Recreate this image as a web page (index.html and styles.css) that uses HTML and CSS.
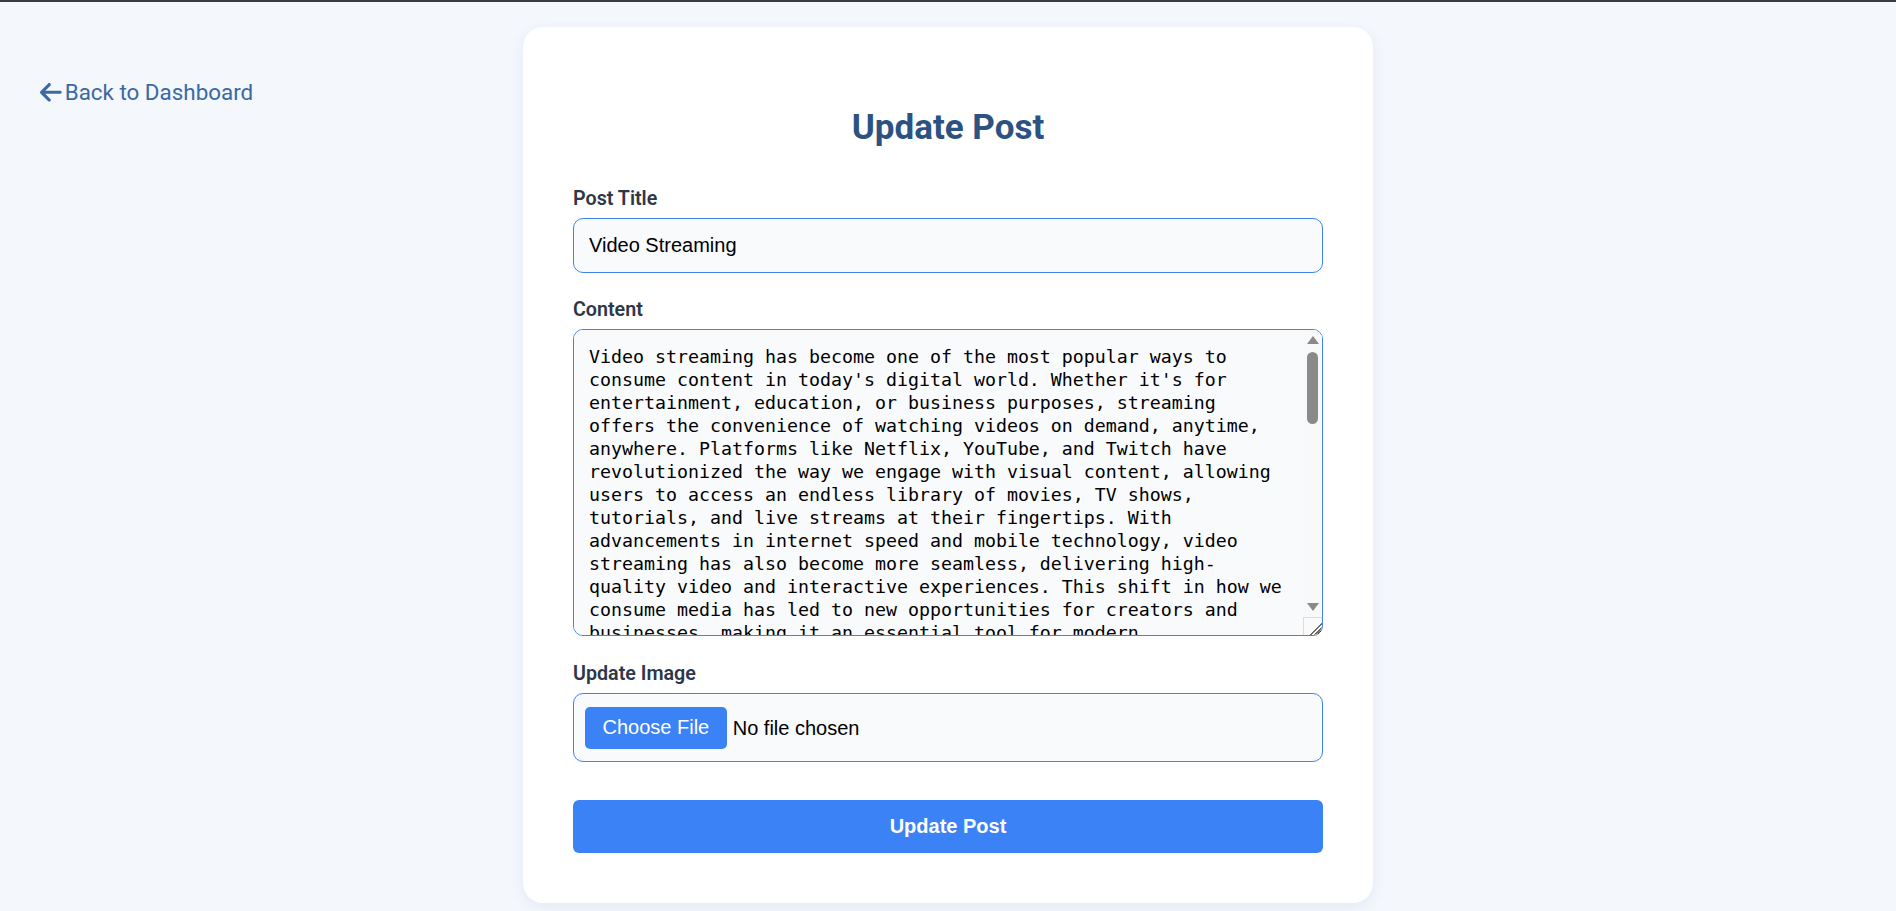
FILE: index.html
```html
<!DOCTYPE html>
<html lang="en">
<head>
<meta charset="utf-8">
<title>Update Post</title>
<link rel="stylesheet" href="styles.css">
</head>
<body>
<div class="topbar"></div>
<div class="page">
  <aside class="side">
    <a class="back" href="#">
      <svg class="back-icon" viewBox="0 64 448 384" aria-hidden="true"><path d="M9.4 233.4c-12.5 12.5-12.5 32.8 0 45.3l160 160c12.5 12.5 32.8 12.5 45.3 0s12.5-32.8 0-45.3L109.2 288 416 288c17.7 0 32-14.3 32-32s-14.3-32-32-32l-306.7 0L214.6 118.6c12.5-12.5 12.5-32.8 0-45.3s-32.8-12.5-45.3 0l-160 160z"/></svg>
      <span>Back to Dashboard</span>
    </a>
  </aside>
  <main class="card">
    <h2 class="title">Update Post</h2>
    <form class="form">
      <div class="group">
        <label class="label" for="post-title">Post Title</label>
        <input id="post-title" class="field input" type="text" value="Video Streaming">
      </div>
      <div class="group">
        <label class="label" for="post-content">Content</label>
        <div class="editor">
          <textarea id="post-content" class="field textarea">Video streaming has become one of the most popular ways to consume content in today's digital world. Whether it's for entertainment, education, or business purposes, streaming offers the convenience of watching videos on demand, anytime, anywhere. Platforms like Netflix, YouTube, and Twitch have revolutionized the way we engage with visual content, allowing users to access an endless library of movies, TV shows, tutorials, and live streams at their fingertips. With advancements in internet speed and mobile technology, video streaming has also become more seamless, delivering high-quality video and interactive experiences. This shift in how we consume media has led to new opportunities for creators and businesses, making it an essential tool for modern communication and marketing.

The rise of live streaming has further transformed the industry, enabling real-time interaction between creators and their audiences. Gamers, musicians, educators, and influencers can now broadcast events as they happen, building communities around shared interests. Features such as live chat, reactions, and virtual gifts have made viewers active participants rather than passive consumers, creating a more engaging and personal experience.

Behind the scenes, streaming relies on sophisticated technologies such as adaptive bitrate streaming, content delivery networks, and efficient video compression codecs like H.264, H.265, and AV1. These technologies ensure that videos load quickly and play smoothly, automatically adjusting quality based on each viewer's internet connection and device capabilities.

Looking ahead, the future of video streaming is bright. Emerging trends like 4K and 8K resolution, virtual reality, cloud gaming, and AI-powered recommendations promise to make streaming even more immersive and personalized. As technology continues to evolve, video streaming will remain at the heart of how we learn, connect, and entertain ourselves.</textarea>
          <div class="scrollbar" aria-hidden="true">
            <span class="sb-btn sb-up"></span>
            <span class="sb-track"><span class="sb-thumb"></span></span>
            <span class="sb-btn sb-down"></span>
          </div>
          <span class="resizer" aria-hidden="true"></span>
        </div>
      </div>
      <div class="group">
        <label class="label" for="post-image">Update Image</label>
        <input id="post-image" class="field file" type="file">
      </div>
      <button class="submit" type="submit">Update Post</button>
    </form>
  </main>
  <div class="spacer"></div>
</div>
</body>
</html>
```

FILE: styles.css
```css
* {
  box-sizing: border-box;
}

html,
body {
  margin: 0;
  height: 100%;
}

body {
  background: #f4f7fc;
  font-family: Roboto, "Liberation Sans", sans-serif;
  overflow: hidden;
}

.topbar {
  height: 2px;
  background: #3c3c3f;
}

.page {
  display: grid;
  grid-template-columns: 1fr 850px 1fr;
  align-items: start;
  padding-top: 25px;
}

.side {
  padding: 52.4px 0 0 40px;
}

.back {
  display: inline-flex;
  align-items: center;
  gap: 3px;
  color: #3a69a6;
  font-size: 22.4px;
  line-height: normal;
  text-decoration: none;
}

.back-icon {
  width: 21.7px;
  height: 18.6px;
  fill: currentColor;
}

.card {
  background: #ffffff;
  border-radius: 20px;
  padding: 50px;
  box-shadow: 0 4px 14px rgba(60, 90, 180, 0.09);
}

.title {
  margin: 29.6px 0 39.2px;
  text-align: center;
  font-size: 35px;
  font-weight: 700;
  line-height: normal;
  color: #2c5282;
}

.form {
  display: flex;
  flex-direction: column;
}

.group {
  display: flex;
  flex-direction: column;
  margin-bottom: 25.4px;
}

.label {
  font-size: 19.7px;
  font-weight: 600;
  line-height: 23px;
  color: #2d3748;
  margin-bottom: 8px;
}

.field {
  width: 100%;
  border: 1px solid #3f84ee;
  border-radius: 10px;
  background: #f8fafc;
  color: #000000;
  outline: none;
}

.input {
  height: 55px;
  padding: 0 15px;
  font: 20px "Liberation Sans", Arial, sans-serif;
}

.editor {
  position: relative;
}

.textarea {
  display: block;
  height: 307px;
  padding: 15px 34px 15px 15px;
  font: 18.27px/23px "DejaVu Sans Mono", "Liberation Mono", monospace;
  resize: vertical;
  overflow-y: auto;
}

.scrollbar {
  position: absolute;
  top: 1px;
  right: 1px;
  bottom: 19px;
  width: 19px;
  display: flex;
  flex-direction: column;
  background: #f9f9fa;
  border-top-right-radius: 9px;
  pointer-events: none;
}

.sb-btn {
  height: 19px;
  flex: none;
  display: flex;
  justify-content: center;
}

.sb-up {
  align-items: flex-start;
  padding-top: 6px;
}

.sb-up::before {
  content: "";
  border-left: 6px solid transparent;
  border-right: 6px solid transparent;
  border-bottom: 8px solid #8a8a8a;
}

.sb-down {
  align-items: flex-start;
  padding-top: 5px;
}

.sb-down::before {
  content: "";
  border-left: 6px solid transparent;
  border-right: 6px solid transparent;
  border-top: 8px solid #8a8a8a;
}

.sb-track {
  flex: 1;
  padding: 3px 4px 0;
}

.sb-thumb {
  display: block;
  height: 72px;
  border-radius: 6px;
  background: #8a8a8a;
}

.resizer {
  position: absolute;
  right: 1px;
  bottom: 1px;
  width: 19px;
  height: 18px;
  background-color: #fafafa;
  background-image: linear-gradient(135deg, transparent 0 63%, #6b6b6b 63% 69%, transparent 69% 77%, #6b6b6b 77% 83%, transparent 83%);
  border-top: 1px solid #dcdcdc;
  border-left: 1px solid #dcdcdc;
  border-bottom-right-radius: 9px;
  pointer-events: none;
}

.file {
  padding: 13px 11px 12px;
  font: 20px "Liberation Sans", Arial, sans-serif;
}

.file::file-selector-button {
  height: 42px;
  padding: 0 17.5px;
  margin: 0 6px 0 0;
  border: none;
  border-radius: 5px;
  background: #3b82f6;
  color: #ffffff;
  font: inherit;
}

.submit {
  margin-top: 13.3px;
  height: 53px;
  border: none;
  border-radius: 6px;
  background: #3b82f6;
  color: #ffffff;
  font: 700 20px "Liberation Sans", Arial, sans-serif;
}
```
